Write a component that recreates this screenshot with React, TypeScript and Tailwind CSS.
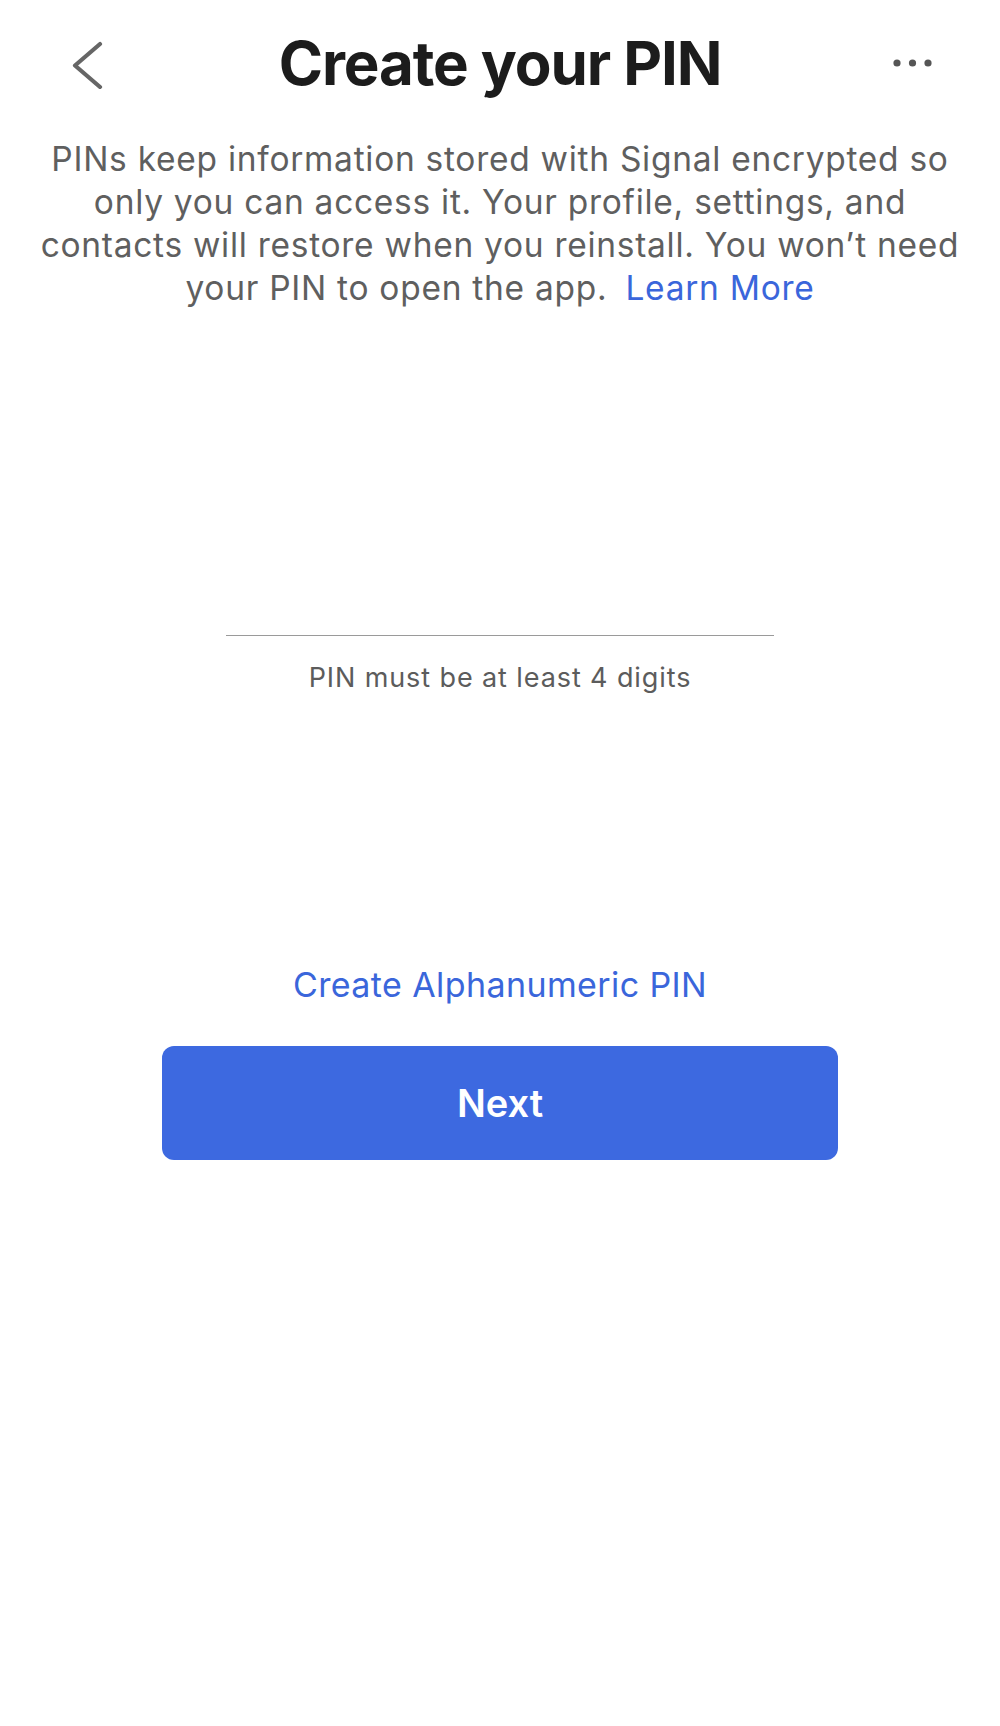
import { useState } from 'react';

const font = { fontFamily: 'Inter, "Noto Sans", sans-serif' };

function BackChevron() {
  return (
    <svg width="32" height="48" viewBox="0 0 32 48" fill="none">
      <polyline points="28,3 3,24.5 28,46" stroke="#666666" strokeWidth="4.2"
        strokeLinecap="round" strokeLinejoin="round" />
    </svg>
  );
}

function MoreDots() {
  return (
    <svg width="42" height="8" viewBox="0 0 42 8" fill="#555555">
      <circle cx="5" cy="4" r="3.6" />
      <circle cx="20.5" cy="4" r="3.6" />
      <circle cx="36" cy="4" r="3.6" />
    </svg>
  );
}

export default function App() {
  const [pin, setPin] = useState('');

  return (
    <div className="min-h-screen w-full bg-white flex flex-col" style={font}>
      {/* Header */}
      <div className="grid grid-cols-[1fr_auto_1fr] items-center pt-[27px]">
        <div className="pl-[72px] flex items-center mt-1">
          <button className="flex items-center"><BackChevron /></button>
        </div>
        <h1 className="text-[60px] leading-[72px] font-bold text-[#1c1c1c] tracking-[-1.1px]">
          Create your PIN
        </h1>
        <div className="flex justify-end pr-[66px]">
          <button className="flex items-center"><MoreDots /></button>
        </div>
      </div>

      {/* Explainer */}
      <p className="mt-[39px] text-center text-[33.5px] leading-[43px] text-[#5f5f5f] tracking-[0.72px]">
        PINs keep information stored with Signal encrypted so<br />
        only you can access it. Your profile, settings, and<br />
        contacts will restore when you reinstall. You won’t need<br />
        your PIN to open the app.{' '}
        <a className="ml-2 text-[#3a66db]">Learn More</a>
      </p>

      {/* PIN input */}
      <div className="mt-[266px] flex flex-col items-center">
        <input
          type="password"
          inputMode="numeric"
          value={pin}
          onChange={e => setPin(e.target.value.replace(/[^0-9]/g, ''))}
          className="w-[548px] h-[60px] bg-transparent outline-none text-center text-[34px] text-[#1c1c1c] border-b border-[#9a9a9a]"
        />
        <p className="mt-[26px] text-[27px] leading-[32px] text-[#5c5c5c] tracking-[0.9px]">
          PIN must be at least 4 digits
        </p>
      </div>

      {/* Actions */}
      <div className="mt-[270px] flex flex-col items-center">
        <button className="text-[34px] leading-[42px] text-[#3a66db] tracking-[0.4px]">
          Create Alphanumeric PIN
        </button>
        <button className="mt-[40px] w-[676px] h-[114px] rounded-[12px] bg-[#3d69e0] text-white text-[38px] font-semibold">
          Next
        </button>
      </div>
    </div>
  );
}
